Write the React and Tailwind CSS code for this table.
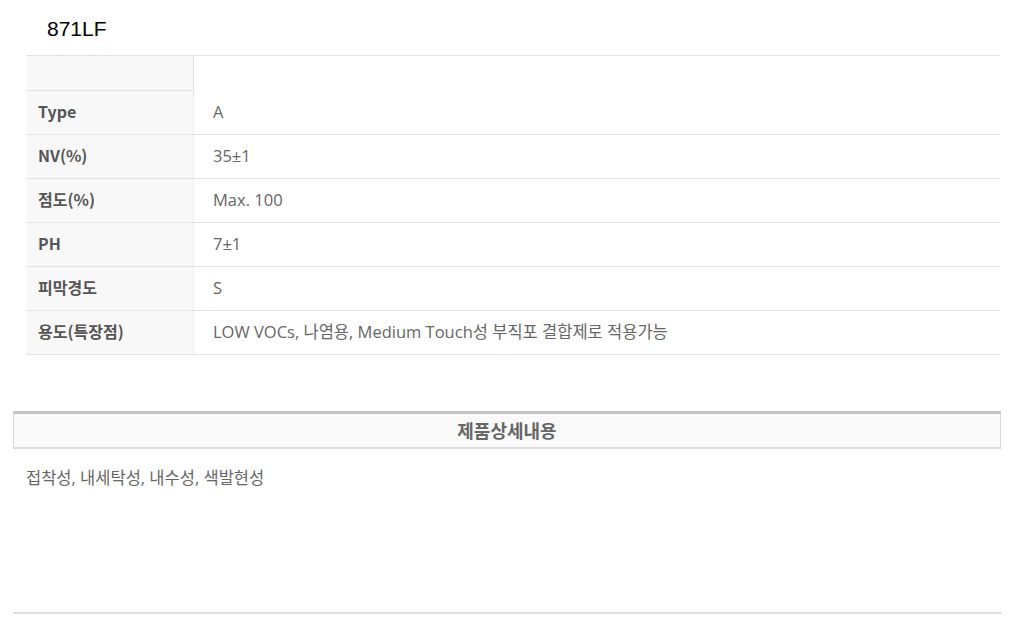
import React from 'react';

const specs = [
  { label: 'Type', value: 'A' },
  { label: 'NV(%)', value: '35±1' },
  { label: '점도(%)', value: 'Max. 100' },
  { label: 'PH', value: '7±1' },
  { label: '피막경도', value: 'S' },
  { label: '용도(특장점)', value: 'LOW VOCs, 나염용, Medium Touch성 부직포 결합제로 적용가능' },
];

const App = () => {
  return (
    <div className="w-[1015px] min-h-[626px] bg-white pt-[16px]">
      <h2 className="pl-[47px] h-[24px] text-[21px] leading-[26px] text-black font-['Liberation_Sans',Arial,sans-serif]">
        871LF
      </h2>

      <div className="ml-[26px] mr-[15px] mt-[15px] border-t border-[#e3e3e3] font-['Open_Sans','Noto_Sans_CJK_KR',sans-serif]">
        <div className="flex h-[35px]">
          <div className="w-[168px] bg-[#f8f8f8] border-b border-r border-[#e3e3e3]" />
          <div className="flex-1" />
        </div>
        {specs.map((row) => (
          <div key={row.label} className="flex h-[44px] border-b border-[#e3e3e3]">
            <div className="w-[168px] bg-[#f8f8f8] border-r border-[#ececec] pl-[12px] pb-[3px] flex items-center text-[16px] font-bold text-[#555] font-['Noto_Sans_CJK_KR',sans-serif]">
              {row.label}
            </div>
            <div className="flex-1 pl-[19px] flex items-center text-[16.5px] text-[#666]">
              {row.value}
            </div>
          </div>
        ))}
      </div>

      <div className="ml-[13px] mr-[14px] mt-[56px]">
        <div className="h-[38px] bg-[#f9f9f9] border-t-[3px] border-t-[#c2c2c2] border-x border-x-[#d9d9d9] border-b-2 border-b-[#dcdcdc] flex items-center justify-center text-[18px] font-bold text-[#666] font-['Noto_Sans_CJK_KR',sans-serif]">
          제품상세내용
        </div>
        <p className="pl-[13px] pt-[17px] h-[163px] text-[16.5px] text-[#666] font-['Open_Sans','Noto_Sans_CJK_KR',sans-serif]">
          접착성, 내세탁성, 내수성, 색발현성
        </p>
        <div className="h-[2px] bg-[#dcdcdc]" />
      </div>
    </div>
  );
};

export default App;
